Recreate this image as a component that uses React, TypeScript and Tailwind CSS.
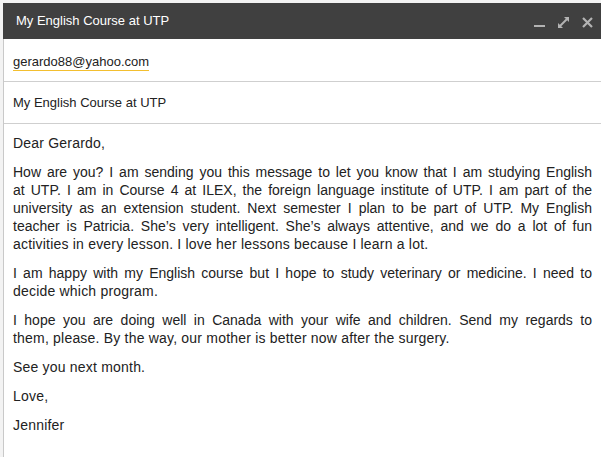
import React from "react"

const font = { fontFamily: '"Liberation Sans", Arial, sans-serif' }

const paragraphs: string[][] = [
    ["Dear Gerardo,"],
    [
        "How are you? I am sending you this message to let you know that I am studying English",
        "at UTP. I am in Course 4 at ILEX, the foreign language institute of UTP. I am part of the",
        "university as an extension student. Next semester I plan to be part of UTP. My English",
        "teacher is Patricia. She’s very intelligent. She’s always attentive, and we do a lot of fun",
        "activities in every lesson. I love her lessons because I learn a lot.",
    ],
    [
        "I am happy with my English course but I hope to study veterinary or medicine. I need to",
        "decide which program.",
    ],
    [
        "I hope you are doing well in Canada with your wife and children. Send my regards to",
        "them, please. By the way, our mother is better now after the surgery.",
    ],
    ["See you next month."],
    ["Love,"],
    ["Jennifer"],
]

const Minimize = () => (
    <svg width="12" height="12" viewBox="0 0 12 12">
        <rect x="0" y="8" width="11" height="2" fill="#b3b3b3" />
    </svg>
)

const Expand = () => (
    <svg width="12" height="12" viewBox="0 0 12 12">
        <polygon points="6,0 11,0 11,5" fill="#b3b3b3" />
        <polygon points="0,6 0,11 5,11" fill="#b3b3b3" />
        <line x1="2" y1="9" x2="9" y2="2" stroke="#b3b3b3" strokeWidth="2" />
    </svg>
)

const Close = () => (
    <svg width="12" height="12" viewBox="0 0 12 12">
        <path d="M1 1 L10 10 M10 1 L1 10" stroke="#b3b3b3" strokeWidth="2.2" />
    </svg>
)

export default function App() {
    return (
        <div className="flex h-[457px] w-full overflow-hidden bg-[#f3f3f3] pl-[3px] pt-[3px]" style={font}>
            <div className="flex flex-1 flex-col">
                {/* title bar */}
                <div className="flex h-[36px] items-center bg-[#404040] pl-[13px] pr-[7px]">
                    <span className="text-[13px] text-white">My English Course at UTP</span>
                    <div className="ml-auto flex items-center gap-[12px] pt-[3px]">
                        <Minimize />
                        <Expand />
                        <Close />
                    </div>
                </div>

                <div className="flex flex-1 flex-col border-l border-[#c9c9c9] bg-white">
                    {/* to */}
                    <div className="h-[43px] border-b border-[#cfcfcf] pl-[9px] pt-[10px]">
                        <span className="inline-block border-b border-[#f3bf2f] text-[13px] leading-[16px] text-[#222]">
                            gerardo88@yahoo.com
                        </span>
                    </div>

                    {/* subject */}
                    <div className="h-[42px] border-b border-[#cfcfcf] pl-[9px] pt-[8px]">
                        <span className="text-[13px] leading-[16px] text-[#222]">My English Course at UTP</span>
                    </div>

                    {/* body */}
                    <div className="pl-[9px] pr-[9px] pt-[10px] text-[14px] leading-[18px] tracking-[0.2px] text-[#222]">
                        {paragraphs.map((lines, i) => (
                            <div key={i} className="mb-[11px]">
                                {lines.map((line, j) => (
                                    <div
                                        key={j}
                                        className={
                                            j < lines.length - 1
                                                ? "text-justify [text-align-last:justify] tracking-normal"
                                                : ""
                                        }
                                    >
                                        {line}
                                    </div>
                                ))}
                            </div>
                        ))}
                    </div>
                </div>
            </div>
        </div>
    )
}
